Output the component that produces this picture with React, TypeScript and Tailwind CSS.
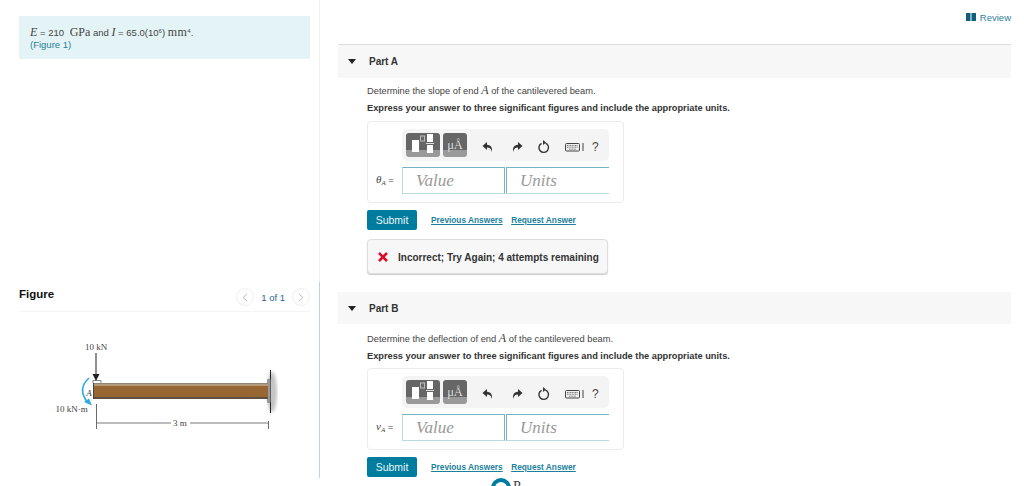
import React from "react";

const M = ({ children }: { children: React.ReactNode }) => (
  <span className="font-['Liberation_Serif',serif] text-[12px] italic">{children}</span>
);

function TemplateIcon() {
  return (
    <svg width="34" height="24" viewBox="0 0 34 24" className="block">
      <rect x="6" y="7" width="7" height="12" fill="#fff" />
      <rect x="14.5" y="3" width="4" height="5" fill="none" stroke="#bbb" strokeWidth="1" />
      <rect x="21" y="1" width="6" height="8" fill="#fff" />
      <rect x="20" y="10" width="8" height="1" fill="#ddd" />
      <rect x="21" y="12" width="6" height="8" fill="#fff" />
    </svg>
  );
}

function Toolbar() {
  return (
    <div className="flex h-[32px] w-[207px] items-center rounded-[5px] bg-[#f4f4f4] pl-1">
      <div className="flex h-[24px] w-[34px] items-center justify-center overflow-hidden rounded-[3px] bg-[linear-gradient(#666_0_70%,#999_70%_100%)]">
        <TemplateIcon />
      </div>
      <div className="ml-[3px] flex h-[24px] w-[24px] items-center justify-center rounded-[3px] bg-[linear-gradient(#666_0_70%,#999_70%_100%)] font-['Liberation_Serif',serif] text-[12.5px] leading-none text-[#ddd]">
        μÅ
      </div>
      <svg width="12" height="12" viewBox="0 0 12 12" className="mt-[4px] ml-[15px]">
        <path d="M5 1 0.5 5 5 9V6.4c2.6 0 4 1 4.8 4.6.9-4-.7-7-4.8-7.2z" fill="#333" />
      </svg>
      <svg width="12" height="12" viewBox="0 0 12 12" className="mt-[4px] ml-[17px]">
        <path d="M7 1l4.5 4L7 9V6.4C4.4 6.400 3 7.400 2.200 11c-.9-4 .7-7 4.800-7.200z" fill="#333" />
      </svg>
      <svg width="14" height="14" viewBox="0 0 14 14" className="mt-[4px] ml-[14px]">
        <path d="M8.4 3.1A4.800 4.800 0 1 1 4.600 3.300" fill="none" stroke="#333" strokeWidth="1.400" />
        <path d="M6 0v5l3-2.500z" fill="#333" />
      </svg>
      <svg width="20" height="10" viewBox="0 0 20 10" className="mt-[4px] ml-[14px]">
        <rect x="0.5" y="1.5" width="14" height="7.5" rx="1" fill="#eee" stroke="#444" />
        <path d="M2 3.500h11M2 5.200h11M4 7.200h7" stroke="#555" strokeWidth="0.800" strokeDasharray="1 0.600" />
        <path d="M18 1v8" stroke="#444" />
      </svg>
      <span className="mt-[3px] ml-[7px] text-[12px] leading-none text-[#444]">?</span>
    </div>
  );
}

function Answer({ sym, top }: { sym: string; top: string }) {
  return (
    <div className={`${top} h-[82px] w-[257px] rounded-[4px] border border-[#ececec] pt-[7px] pl-[34px]`}>
      <Toolbar />
      <div className="relative mt-[6px] flex h-[27px]">
        <div className="absolute top-[5px] -left-[26px] w-[26px] whitespace-nowrap text-[9.500px] leading-[14px] text-[#444]">
          <span className="font-['Liberation_Serif',serif] text-[11px] italic">{sym}</span>
          <sub className="font-['Liberation_Serif',serif] text-[7px] italic">A</sub> =
        </div>
        <div className="flex h-[27px] w-[103px] items-center border border-t-[#74b3c4] border-r-[#74b3c4] border-b-[#b8dbe3] border-l-[#b8dbe3] pl-[13px] font-['Liberation_Serif',serif] text-[17px] text-[#999] italic">
          Value
        </div>
        <div className="ml-[1px] flex h-[27px] w-[103px] items-center border-t border-b border-l border-t-[#74b3c4] border-b-[#b8dbe3] border-l-[#74b3c4] pl-[13px] font-['Liberation_Serif',serif] text-[17px] text-[#999] italic">
          Units
        </div>
      </div>
    </div>
  );
}

function Actions() {
  return (
    <div className="mt-[7px] flex items-center">
      <div className="flex h-[20px] w-[50px] items-center justify-center rounded-[2px] bg-[#007c9e] pt-px text-[10.500px] text-[#e8f4f7]">
        Submit
      </div>
      <span className="ml-[14px] text-[8.300px] font-bold text-[#1d7f9b] underline">Previous Answers</span>
      <span className="ml-[8.500px] text-[8.300px] font-bold text-[#1d7f9b] underline">Request Answer</span>
    </div>
  );
}

function PartHead({ label, h }: { label: string; h: string }) {
  return (
    <div className={`flex ${h} items-center bg-[#f7f7f7]`}>
      <svg width="8" height="5" viewBox="0 0 8 5" className="ml-[10px]">
        <path d="M0 0h8L4 5z" fill="#222" />
      </svg>
      <span className="ml-[13px] text-[10px] font-bold text-[#333]">{label}</span>
    </div>
  );
}

function Figure() {
  return (
    <svg width="262" height="134" viewBox="0 0 262 134" className="block">
      <defs>
        <filter id="b"><feGaussianBlur stdDeviation="1.500" /></filter>
      </defs>
      <g transform="translate(-19,-312)">
        <ellipse cx="272" cy="392" rx="5" ry="20" fill="#c4c4c4" filter="url(#b)" />
        <path d="M270.500 370v43" stroke="#222" strokeWidth="1" />
        <rect x="267" y="379" width="3.500" height="24" rx="1" fill="#999" />
        <rect x="93" y="383" width="175" height="1" fill="#8f8576" />
        <rect x="93" y="384" width="175" height="2" fill="#b39a78" />
        <rect x="93" y="386" width="175" height="11" fill="#966633" />
        <rect x="93" y="397" width="175" height="2" fill="#5c5044" />
        <rect x="93" y="382" width="1" height="17" fill="#444" />
        <path d="M93 383v-2.500h8v2.500" fill="#fff" stroke="#555" strokeWidth="0.700" />
        <path d="M96 353v24" stroke="#222" strokeWidth="1" />
        <path d="M92.500 374h7L96 381z" fill="#222" />
        <path d="M89 378c-8 7-9 15-1 25" fill="none" stroke="#2fa9df" strokeWidth="1.600" />
        <path d="M84 402l8 3.500-3-7z" fill="#2fa9df" />
        <text x="89" y="396" fontFamily="Liberation Serif" fontStyle="italic" fontSize="9" fill="#333" textAnchor="middle">A</text>
        <text x="96" y="350" fontFamily="Liberation Serif" fontSize="9" fill="#444" textAnchor="middle">10 kN</text>
        <text x="55.500" y="412" fontFamily="Liberation Serif" fontSize="9" fill="#444">10 kN·m</text>
        <path d="M96.500 404v25M268.500 421v8" stroke="#444" strokeWidth="0.800" />
        <path d="M97 423h74M190 423h78" stroke="#555" strokeWidth="0.800" />
        <text x="180" y="426" fontFamily="Liberation Serif" fontSize="9" fill="#444" textAnchor="middle">3 m</text>
      </g>
    </svg>
  );
}

export default function App() {
  return (
    <div className="flex h-[486px] w-[1024px] overflow-hidden bg-white font-['Liberation_Sans',sans-serif]">
      <div className="w-[320px] shrink-0">
        <div className="h-[282px] border-r border-[#efefef] pt-4 pr-[9px] pl-[19px]">
          <div className="h-[43px] w-[291px] bg-[#e4f4f6] pt-[10px] pl-[11px] text-[9.500px] leading-[12px] text-[#444]">
            <div className="h-[13px] whitespace-nowrap">
              <M>E</M> = 210 <span className="ml-[3px] font-['Liberation_Serif',serif] text-[12px]">GPa</span> and <M>I</M> = 65.0(10
              <sup className="text-[6px]">6</sup>) <span className="font-['Liberation_Serif',serif] text-[12px] tracking-[0.5px]">mm</span>
              <sup className="text-[6px]">4</sup>.
            </div>
            <div className="text-[#1f7f99]">(Figure 1)</div>
          </div>
        </div>
        <div className="h-[196px] border-r border-[#c3d0e0] pr-[9px] pl-[19px]">
          <div className="flex h-[30px] items-start justify-between border-b border-[#f4f4f4] pt-[5px]">
            <span className="text-[11.500px] leading-[14px] font-bold text-[#111]">Figure</span>
            <div className="mt-[1px] flex items-center text-[9.500px] text-[#1f5f8a]">
              <span className="flex h-[18px] w-[18px] items-center justify-center rounded-full border border-[#f0f0f0]">
                <svg width="6" height="9" viewBox="0 0 6 9"><path d="M5 1 1 4.500 5 8" fill="none" stroke="#bbb" /></svg>
              </span>
              <span className="mx-[7px] mt-[2px]">1 of 1</span>
              <span className="flex h-[18px] w-[18px] items-center justify-center rounded-full border border-[#f0f0f0]">
                <svg width="6" height="9" viewBox="0 0 6 9"><path d="M1 1 5 4.500 1 8" fill="none" stroke="#bbb" /></svg>
              </span>
            </div>
          </div>
          <Figure />
        </div>
      </div>

      <div className="w-[691px] shrink-0 pl-[18px]">
        <div className="flex h-[44px] items-start justify-end pt-[12px]">
          <svg width="10" height="8" viewBox="0 0 10 8" className="mt-[1px]">
            <path d="M0 0h4.500v8H0zM5.500 0H10v8H5.500z" fill="#0f5f7a" />
          </svg>
          <span className="ml-[4px] text-[9.500px] leading-[11px] text-[#2f7f99]">Review</span>
        </div>
        <div className="border-t border-[#ddd]">
          <PartHead label="Part A" h="h-[33px]" />
        </div>
        <div className="pl-[29px]">
          <p className="mt-[6px] h-[12px] text-[9.300px] leading-[12px] text-[#444]">
            Determine the slope of end <span className="font-['Liberation_Serif',serif] text-[12px] italic">A</span> of the cantilevered beam.
          </p>
          <p className="mt-[6px] h-[12px] text-[9.250px] leading-[12px] font-bold text-[#333]">
            Express your answer to three significant figures and include the appropriate units.
          </p>
          <Answer sym="θ" top="mt-[7px]" />
          <Actions />
          <div className="mt-[9px] flex h-[35px] w-[241px] items-center rounded-[4px] border border-[#ddd] bg-[#f7f7f7] pl-[10px] shadow-[0_1px_1px_#ccc]">
            <svg width="10" height="10" viewBox="0 0 10 10">
              <path d="M1 1l8 8M9 1l-8 8" stroke="#dc0d2b" strokeWidth="2.600" />
            </svg>
            <span className="mt-px ml-[10px] text-[10px] font-bold text-[#333]">Incorrect; Try Again; 4 attempts remaining</span>
          </div>
        </div>
        <div className="mt-[18px]">
          <PartHead label="Part B" h="h-[32px]" />
        </div>
        <div className="pl-[29px]">
          <p className="mt-[8px] h-[12px] text-[9.300px] leading-[12px] text-[#444]">
            Determine the deflection of end <span className="font-['Liberation_Serif',serif] text-[12px] italic">A</span> of the cantilevered beam.
          </p>
          <p className="mt-[6px] h-[12px] text-[9.250px] leading-[12px] font-bold text-[#333]">
            Express your answer to three significant figures and include the appropriate units.
          </p>
          <Answer sym="v" top="mt-[6px]" />
          <Actions />
          <div className="mt-[1px] ml-[124px] flex items-start">
            <div className="h-[20px] w-[20px] shrink-0 rounded-full border-[4px] border-[#007c9e]" />
            <span className="mt-[1px] ml-[2px] font-['Liberation_Serif',serif] text-[14px] leading-[16px] text-[#444]">P</span>
          </div>
        </div>
      </div>
    </div>
  );
}
